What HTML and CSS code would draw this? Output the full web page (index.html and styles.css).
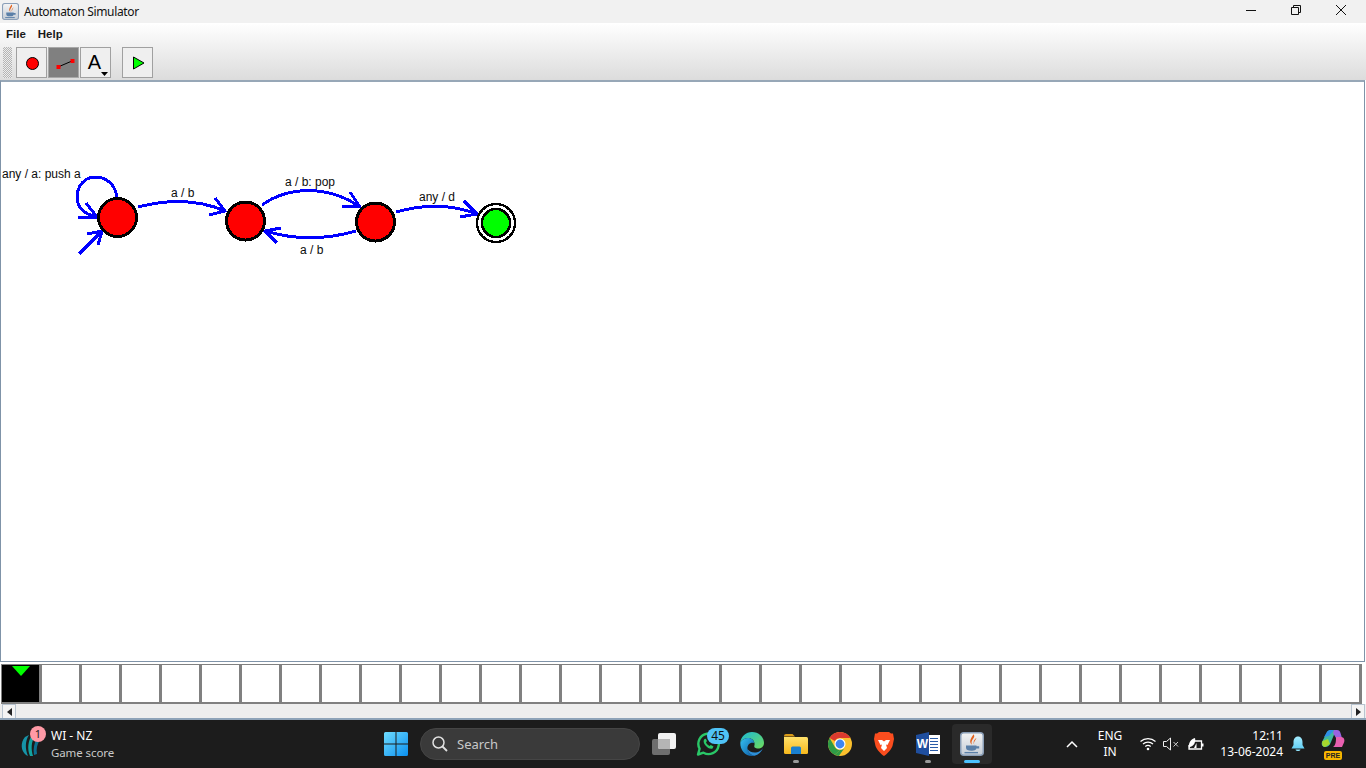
FILE: index.html
```html
<!DOCTYPE html>
<html lang="en">
<head>
<meta charset="utf-8">
<title>Automaton Simulator</title>
<link rel="stylesheet" href="styles.css">
</head>
<body>
<svg class="defs" width="0" height="0" aria-hidden="true">
  <defs>
    <linearGradient id="jbg" x1="0" y1="0" x2="0" y2="1"><stop offset="0" stop-color="#f4f4f4"/><stop offset="1" stop-color="#c4ccd6"/></linearGradient>
    <linearGradient id="win" x1="0" y1="0" x2="1" y2="1"><stop offset="0" stop-color="#6fdcff"/><stop offset="1" stop-color="#0a8fef"/></linearGradient>
    <linearGradient id="fold" x1="0" y1="0" x2="0" y2="1"><stop offset="0" stop-color="#ffe16b"/><stop offset="1" stop-color="#f7b81c"/></linearGradient>
    <linearGradient id="edge" x1="0" y1="0" x2="1" y2="1"><stop offset="0" stop-color="#35c1f1"/><stop offset="1" stop-color="#0c59a4"/></linearGradient>
    <linearGradient id="edge2" x1="0" y1="0" x2="1" y2="1"><stop offset="0" stop-color="#1bb8d8"/><stop offset="1" stop-color="#6fdc5a"/></linearGradient>
    <linearGradient id="bell" x1="0" y1="0" x2="0" y2="1"><stop offset="0" stop-color="#a5ecff"/><stop offset="1" stop-color="#63d0f5"/></linearGradient>
    <symbol id="java" viewBox="0 0 16 16">
      <rect x="0.5" y="0.5" width="15" height="15" rx="2" fill="url(#jbg)" stroke="#8b9fb8"/>
      <path d="M9 1.500C11 4 6.500 5 8 8.500C5.500 6.500 7.500 4 9 1.500ZM11 4C10 6 9 6.500 9.500 8.500C8.500 6.500 9.500 5 11 4Z" fill="#e2611d"/>
      <path d="M4 9H11V10.500C11 12 9.500 12.500 7.500 12.500C5.500 12.500 4 12 4 10.500ZM11 9.500H12.800V11H11Z" fill="#5a7fa8"/>
      <path d="M3 13.300H12V14.200H3Z" fill="#5a7fa8"/>
    </symbol>
  </defs>
</svg>

<header class="titlebar">
  <svg class="app-icon" width="17" height="17"><use href="#java"/></svg>
  <span class="title">Automaton Simulator</span>
  <div class="winbtns">
    <span class="winbtn"><svg width="12" height="12" viewBox="0 0 12 12"><path d="M1 6.500H11" stroke="#111" fill="none"/></svg></span>
    <span class="winbtn"><svg width="12" height="12" viewBox="0 0 12 12"><path d="M1.500 3.500H8.500V10.500H1.500ZM3.500 3.500V1.500H10.500V8.500H8.500" stroke="#111" fill="none"/></svg></span>
    <span class="winbtn"><svg width="12" height="12" viewBox="0 0 12 12"><path d="M1 1L11 11M11 1L1 11" stroke="#111" fill="none"/></svg></span>
  </div>
</header>

<div class="chrome">
  <nav class="menubar"><span class="menu">File</span><span class="menu">Help</span></nav>
  <div class="toolbar">
    <span class="grip"></span>
    <button class="tool"><svg width="16" height="16" viewBox="0 0 16 16"><circle cx="8.500" cy="8.500" r="6" fill="#f00" stroke="#000"/></svg></button>
    <button class="tool tool-on"><svg width="24" height="16" viewBox="0 0 24 16"><path d="M6 12L20 6" stroke="#000" fill="none"/><rect x="4.500" y="10" width="4" height="4" fill="#f00"/><rect x="18.500" y="4" width="4" height="4" fill="#f00"/></svg></button>
    <button class="tool tool-text"><span class="tool-a">A</span><svg class="caret" width="7" height="4" viewBox="0 0 7 4"><path d="M0 0H7L3.500 4Z" fill="#000"/></svg></button>
    <button class="tool tool-run"><svg width="16" height="16" viewBox="0 0 16 16"><path d="M3.500 2L14 8L3.500 14Z" fill="#0f0" stroke="#000"/></svg></button>
  </div>
</div>

<main class="canvas">
  <svg class="diagram" width="560" height="200" viewBox="0 82 560 200">
    <g class="edges" shape-rendering="crispEdges">
      <path d="M117 197C115 184 106 177 95 177C84 177 77 187 77 197C77 208 85 214 96 217"/>
      <path d="M86 203L97 217L78 217"/>
      <path d="M79 254L102 231M87 234L102 231L98 245"/>
      <path d="M138 207C165 200 195 198 225 211"/>
      <path d="M215 198L225 211L209 215"/>
      <path d="M262 205C290 185 330 186 360 207"/>
      <path d="M350 192L360 207L342 206"/>
      <path d="M356 231C325 240 295 240 265 231"/>
      <path d="M281 228L265 231L277 243"/>
      <path d="M396 212C425 204 450 204 477 214"/>
      <path d="M464 201L477 214L460 217"/>
    </g>
    <g class="nodes" shape-rendering="crispEdges">
      <circle cx="117.500" cy="217.500" r="19"/>
      <circle cx="245.500" cy="221" r="19"/>
      <circle cx="375.500" cy="222" r="19"/>
      <circle class="final-ring" cx="496" cy="223" r="19"/>
      <circle class="final" cx="496" cy="223" r="14"/>
    </g>
    <g class="labels">
      <text x="2" y="178">any / a: push a</text>
      <text x="171" y="197">a / b</text>
      <text x="285" y="186">a / b: pop</text>
      <text x="300" y="254">a / b</text>
      <text x="419" y="201">any / d</text>
    </g>
  </svg>
</main>

<section class="tape">
  <div class="cells">
    <div class="cell cell-head"><span class="head-mark"></span></div>
    <div class="cell"></div><div class="cell"></div><div class="cell"></div><div class="cell"></div><div class="cell"></div><div class="cell"></div><div class="cell"></div><div class="cell"></div><div class="cell"></div><div class="cell"></div>
    <div class="cell"></div><div class="cell"></div><div class="cell"></div><div class="cell"></div><div class="cell"></div><div class="cell"></div><div class="cell"></div><div class="cell"></div><div class="cell"></div><div class="cell"></div>
    <div class="cell"></div><div class="cell"></div><div class="cell"></div><div class="cell"></div><div class="cell"></div><div class="cell"></div><div class="cell"></div><div class="cell"></div><div class="cell"></div><div class="cell"></div>
    <div class="cell"></div><div class="cell"></div><div class="cell"></div>
  </div>
</section>

<div class="hscroll">
  <span class="sbtn"><span class="tri tri-l"></span></span>
  <span class="strack"></span>
  <span class="sbtn"><span class="tri tri-r"></span></span>
</div>

<footer class="taskbar">
  <div class="tb-left">
    <span class="widget-icon">
      <svg width="24" height="26" viewBox="0 0 24 26"><path d="M6 24C1 20 0 12 5 6L9 4C5 10 5 18 8 25Z" fill="#1694a8"/><path d="M10 25C7 18 8 10 12 4L15 5C11 11 11 18 13 25Z" fill="#12a3a0"/><path d="M14 24C13 18 14 12 17 7L20 9C17 13 16 18 17 23Z" fill="#0d6f8f"/></svg>
      <span class="widget-badge">1</span>
    </span>
    <div class="widget-text"><div class="w1">WI - NZ</div><div class="w2">Game score</div></div>
  </div>
  <div class="tb-center">
    <span class="slot"><svg width="24" height="24" viewBox="0 0 24 24"><path d="M0 1.500A1.500 1.500 0 0 1 1.500 0H11.500V11.500H0ZM12.500 0H22.500A1.500 1.500 0 0 1 24 1.500V11.500H12.500ZM0 12.500H11.500V24H1.500A1.500 1.500 0 0 1 0 22.500ZM12.500 12.500H24V22.500A1.500 1.500 0 0 1 22.500 24H12.500Z" fill="url(#win)"/></svg></span>
    <div class="searchbox">
      <svg width="18" height="18" viewBox="0 0 18 18"><circle cx="7.500" cy="7.500" r="5.500" fill="none" stroke="#e0e0e0" stroke-width="1.500"/><path d="M11.500 11.500L16 16" stroke="#e0e0e0" stroke-width="1.800"/></svg>
      <span>Search</span>
    </div>
    <span class="slot"><svg width="26" height="24" viewBox="0 0 26 24"><rect x="1" y="7" width="18" height="16" rx="2" fill="#6e6e6e"/><rect x="7" y="1" width="18" height="16" rx="2" fill="#f2f2f2"/><path d="M7 7H19V17H9A2 2 0 0 1 7 15Z" fill="#b5b5b5"/></svg></span>
    <span class="slot">
      <svg class="wa" width="24" height="24" viewBox="0 0 24 24"><path d="M2 22.500L3.600 16.700A10.200 10.200 0 1 1 7.500 20.700Z" fill="none" stroke="#29c767" stroke-width="2.400" stroke-linejoin="round"/><path d="M8.500 7C7 8.500 7.500 11 9.500 13.500C11.500 16 14.500 17.500 16.500 16.500L17.500 14.500L14.800 13L13.500 14C12 13.500 10.500 11.800 10 10.300L11 9L9.800 6.700Z" fill="#29c767"/></svg>
      <span class="count">45</span>
    </span>
    <span class="slot"><svg width="24" height="24" viewBox="0 0 24 24"><path d="M12 0C18.500 0 24 4.800 24 11C24 15 20.500 17 17 16.500C15 16.200 13.500 15 14.500 13C15 11.500 14 6 8 6C5 6 2 7.500 0.300 10.500C1 4.500 6 0 12 0Z" fill="url(#edge2)"/><path d="M0.300 10.500C2 7.500 5 6 8 6C11.500 6 14.200 8.500 14.200 11C10 10 7 13 7.500 17C8 20.500 11 23.300 14.500 23.800C13.500 24 12.800 24 12 24C5 24 0 18 0.300 10.500Z" fill="url(#edge)"/><path d="M14.500 23.800C11 23.300 8 20.500 7.500 17C8.500 19 12 21 16 20.500C19 20.200 21.500 18.500 23 16C21.500 20 18.500 23 14.500 23.800Z" fill="#2d8fd8"/></svg></span>
    <span class="slot"><svg width="24" height="20" viewBox="0 0 24 20"><path d="M0 2A2 2 0 0 1 2 0H8.500L11 2.500H0Z" fill="#d99a17"/><path d="M0 3H22.500A1.500 1.500 0 0 1 24 4.500V18.500A1.500 1.500 0 0 1 22.500 20H1.500A1.500 1.500 0 0 1 0 18.500Z" fill="url(#fold)"/><path d="M7 14A1.500 1.500 0 0 1 8.500 12.500H15.500A1.500 1.500 0 0 1 17 14V20H7Z" fill="#1a80d0"/></svg><span class="dot"></span></span>
    <span class="slot"><svg width="24" height="24" viewBox="0 0 24 24"><circle cx="12" cy="12" r="12" fill="#fbc02d"/><path d="M12 0A12 12 0 0 1 22.400 6H12A6 6 0 0 0 6.800 9L1.600 6A12 12 0 0 1 12 0Z" fill="#db3a2f"/><path d="M1.600 6L6.800 15A6 6 0 0 0 12 18L6.800 22.800A12 12 0 0 1 1.600 6Z" fill="#2e9b47"/><path d="M6.800 22.800L12 18A6 6 0 0 0 17.200 15L10.900 24A12 12 0 0 1 6.800 22.800Z" fill="#2e9b47"/><circle cx="12" cy="12" r="5.500" fill="#fff"/><circle cx="12" cy="12" r="4.400" fill="#3f85f0"/></svg></span>
    <span class="slot"><svg width="20" height="24" viewBox="0 0 20 24"><path d="M5 0H15L17 1.500L19 1.500L20 7L18.500 14C17 18 13 22 10 24C7 22 3 18 1.500 14L0 7L1 1.500L3 1.500Z" fill="#fb4d1e"/><path d="M4 8L8 8L10 9.500L12 8L16 8L13.500 13L12 12.500L13 16L10 19L7 16L8 12.500L6.500 13Z" fill="#fff"/></svg></span>
    <span class="slot"><svg width="24" height="24" viewBox="0 0 24 24"><rect x="8" y="3" width="16" height="19" fill="#fff"/><path d="M14 6.500H22M14 9.500H22M14 12.500H22M14 15.500H22M14 18.500H22" stroke="#2b5ca8"/><path d="M0 3L13 0V24L0 21Z" fill="#1f4e9e"/><text class="word-w" x="6.500" y="16">W</text></svg><span class="dot"></span></span>
    <span class="slot slot-active"><svg width="24" height="24"><use href="#java"/></svg><span class="active-bar"></span></span>
  </div>
  <div class="tb-right">
    <span class="tray-chev"><svg width="12" height="8" viewBox="0 0 12 8"><path d="M1 7L6 2L11 7" fill="none" stroke="#fff" stroke-width="1.500"/></svg></span>
    <div class="lang"><div>ENG</div><div>IN</div></div>
    <div class="tray-icons">
      <svg width="16" height="14" viewBox="0 0 16 14"><path d="M0.500 4.500A11 11 0 0 1 15.500 4.500M3 7A7.500 7.500 0 0 1 13 7M5.300 9.500A4 4 0 0 1 10.700 9.500" fill="none" stroke="#fff" stroke-width="1.200"/><circle cx="8" cy="12" r="1.300" fill="#fff"/></svg>
      <svg width="16" height="14" viewBox="0 0 16 14"><path d="M0.500 4.500H3.500L7.500 1V13L3.500 9.500H0.500Z" fill="none" stroke="#eee"/><path d="M10.500 5L15 9.500M15 5L10.500 9.500" stroke="#ccc"/></svg>
      <svg width="17" height="14" viewBox="0 0 17 14"><path d="M5 4H14.500V12H2V8" fill="none" stroke="#fff" stroke-width="1.300"/><path d="M15 6.500H16.500V9.500H15Z" fill="#fff"/><path d="M2 11C1 6 4 2 8 1C9 5 7 9 3 10L2 12Z" fill="#fff"/><path d="M7 11L9.500 6V11Z" fill="#fff"/></svg>
    </div>
    <div class="clock"><div>12:11</div><div>13-06-2024</div></div>
    <span class="bell"><svg width="14" height="16" viewBox="0 0 14 16"><path d="M7 0.500C10 0.500 11.500 3 11.500 6V9L13.500 12.500H0.500L2.500 9V6C2.500 3 4 0.500 7 0.500Z" fill="url(#bell)"/><path d="M4.500 13.500H9.500C9 15.500 5 15.500 4.500 13.500Z" fill="#8fe3fb"/></svg></span>
    <span class="copilot">
      <svg width="24" height="20" viewBox="0 0 24 20"><path d="M6 2C7 0.500 8.500 0 10 0H15L10 12C9 15 7 17 4 17C1.500 17 0 14.500 1 12Z" fill="#3fb8a0"/><path d="M6 2C7 0.500 8.500 0 10 0H13L8 6L3 7Z" fill="#2f8fe8"/><path d="M13 0H16C18 0 19 1 19.500 3L21 8H15L12 3Z" fill="#9a62e0"/><path d="M15 7H20C23 7 24 10 23 12.500L21 17H12C15 15 15 11 15 7Z" fill="#e85fb0"/><path d="M1.500 11L7 9L9 14L4 17C1.500 17 0.500 14 1.500 11Z" fill="#a6d82d"/></svg>
      <span class="pre">PRE</span>
    </span>
  </div>
</footer>
</body>
</html>
```

FILE: styles.css
```css
* { box-sizing: border-box; }
html, body { margin: 0; padding: 0; }
body {
  width: 1366px;
  height: 768px;
  overflow: hidden;
  display: flex;
  flex-direction: column;
  background: #fff;
  font-family: "Liberation Sans", Arial, sans-serif;
}
.defs { position: absolute; }

.titlebar {
  height: 23px;
  flex: none;
  display: flex;
  align-items: center;
  padding-left: 2px;
  background: #f1f1f1;
}
.app-icon { margin-top: -1px; }
.title {
  margin-left: 5px;
  font: 12px/16px "Noto Sans", sans-serif;
  letter-spacing: -0.35px;
  color: #111;
}
.winbtns { margin-left: auto; display: flex; padding-right: 2px; }
.winbtn {
  width: 46px;
  height: 23px;
  display: flex;
  align-items: center;
  justify-content: center;
  padding-bottom: 3px;
}
.winbtn:first-child { width: 45px; }
.winbtn:nth-child(2) { width: 45px; }

.chrome {
  height: 57px;
  flex: none;
  background: linear-gradient(#ffffff 0, #fafafa 8px, #dcdcdc 100%);
}
.menubar {
  height: 22px;
  display: flex;
  align-items: center;
  gap: 12px;
  padding-left: 6px;
}
.menu { font-size: 11.500px; font-weight: 700; color: #1a1a1a; }
.toolbar {
  height: 35px;
  display: flex;
  align-items: flex-start;
  padding: 2px 0 0 3px;
}
.grip {
  width: 9px;
  height: 31px;
  margin-right: 4px;
  background: repeating-conic-gradient(#b4b4b4 0 25%, #ececec 0 50%) 0 0 / 2px 2px;
}
.tool {
  width: 31px;
  height: 31px;
  margin: 0 1px 0 0;
  padding: 0;
  border: 1px solid #a0a0a0;
  background: #efefef;
  display: flex;
  align-items: center;
  justify-content: center;
  position: relative;
}
.tool-on { background: #808080; border-color: #a8a8a8; }
.tool-run { margin-left: 10px; }
.tool-a {
  font: 20px/24px "Liberation Sans", sans-serif;
  color: #000;
  margin-right: 2px;
  margin-bottom: 1px;
}
.caret { position: absolute; right: 2px; bottom: 1px; }

.canvas {
  flex: 1;
  min-height: 0;
  margin-right: 1px;
  background: #fff;
  border: 1px solid #7f93a8;
  border-top: 2px solid #97a7b7;
  position: relative;
  margin-bottom: 1px;
}
.diagram { position: absolute; left: -1px; top: 0; }
.edges path { fill: none; stroke: #0000ff; stroke-width: 3; }
.nodes circle { fill: #f00; stroke: #000; stroke-width: 3; }
.nodes .final-ring { fill: #fff; stroke-width: 2.500; }
.nodes .final { fill: #0f0; stroke-width: 2.500; }
.labels { opacity: 0.95; }
.labels text { font: 12px "Liberation Sans", sans-serif; fill: #000; }

.tape {
  height: 41px;
  flex: none;
  padding: 1px 0 0 1px;
  background: #fff;
}
.cells {
  display: flex;
  width: fit-content;
  gap: 3px;
  padding: 1px 3px 2px 1px;
  background: #808080;
}
.cell { width: 37px; height: 37px; background: #fff; }
.cell-head { background: #000; display: flex; justify-content: center; }
.head-mark {
  width: 0;
  height: 0;
  border-left: 9px solid transparent;
  border-right: 9px solid transparent;
  border-top: 10px solid #0f0;
  margin-top: 1px;
}

.hscroll {
  height: 16px;
  flex: none;
  display: flex;
  padding: 0 1px 0 2px;
  background: #eeeeee;
  border-bottom: 2px solid #8ea3b8;
}
.sbtn {
  width: 14px;
  display: flex;
  align-items: center;
  justify-content: center;
  background: #f4f4f4;
  border: 1px solid #b8c4d0;
  border-bottom: 0;
}
.strack { flex: 1; background: #eeeeee; margin: 0 1px; }
.tri { width: 0; height: 0; border-top: 4px solid transparent; border-bottom: 4px solid transparent; }
.tri-l { border-right: 5px solid #222; }
.tri-r { border-left: 5px solid #222; }

.taskbar {
  height: 48px;
  flex: none;
  display: flex;
  background: #1c1c1c;
  color: #fff;
  font-family: "Noto Sans", sans-serif;
}
.tb-left {
  width: 374px;
  display: flex;
  align-items: center;
  padding-left: 20px;
}
.widget-icon { position: relative; width: 24px; height: 26px; margin-right: 7px; }
.widget-badge {
  position: absolute;
  left: 10px;
  top: -5px;
  width: 16px;
  height: 16px;
  border-radius: 50%;
  background: #ff9aa6;
  color: #222;
  font-size: 11px;
  line-height: 16px;
  text-align: center;
}
.w1 { font-size: 12px; line-height: 16px; color: #fff; }
.w2 { font-size: 11.500px; line-height: 16px; margin-top: 1px; color: #c9c9c9; letter-spacing: -0.1px; }
.tb-center { display: flex; align-items: center; }
.slot {
  width: 44px;
  height: 48px;
  display: flex;
  align-items: center;
  justify-content: center;
  position: relative;
}
.wa { margin-left: -1px; }
.searchbox {
  width: 220px;
  height: 32px;
  margin: 0 2px;
  border-radius: 16px;
  background: #3a3a3a;
  border: 1px solid #454545;
  display: flex;
  align-items: center;
  gap: 8px;
  padding-left: 10px;
  font-size: 13px;
  color: #c8c8c8;
}
.count {
  position: absolute;
  left: 21px;
  top: 8px;
  width: 22px;
  height: 16px;
  border-radius: 8px;
  background: #4fc3f7;
  color: #111;
  font-size: 12px;
  line-height: 16px;
  text-align: center;
}
.dot {
  position: absolute;
  left: 19px;
  bottom: 5px;
  width: 6px;
  height: 3px;
  border-radius: 2px;
  background: #9a9a9a;
}
.word-w { font: 700 12px "Liberation Sans", sans-serif; fill: #fff; text-anchor: middle; }
.slot-active { width: 40px; height: 40px; margin-left: 2px; background: #2a2a2a; border-radius: 4px; }
.active-bar {
  position: absolute;
  left: 12px;
  bottom: 1px;
  width: 16px;
  height: 3px;
  border-radius: 2px;
  background: #4cc2ff;
}
.tb-right {
  margin-left: auto;
  display: flex;
  align-items: center;
}
.tray-chev { width: 28px; display: flex; justify-content: center; }
.lang { width: 48px; text-align: center; font-size: 12px; line-height: 16px; }
.tray-icons { width: 72px; margin-left: 2px; display: flex; justify-content: space-around; align-items: center; }
.clock { width: 75px; text-align: right; font-size: 12px; line-height: 16px; }
.bell { width: 30px; display: flex; justify-content: center; }
.copilot { position: relative; width: 40px; height: 32px; margin-right: 13px; display: flex; justify-content: center; padding-top: 2px; }
.pre {
  position: absolute;
  left: 11px;
  bottom: 0;
  width: 18px;
  height: 9px;
  border-radius: 2px;
  background: #f8b500;
  color: #222;
  font: 700 7px/9px "Liberation Sans", sans-serif;
  text-align: center;
}
```
